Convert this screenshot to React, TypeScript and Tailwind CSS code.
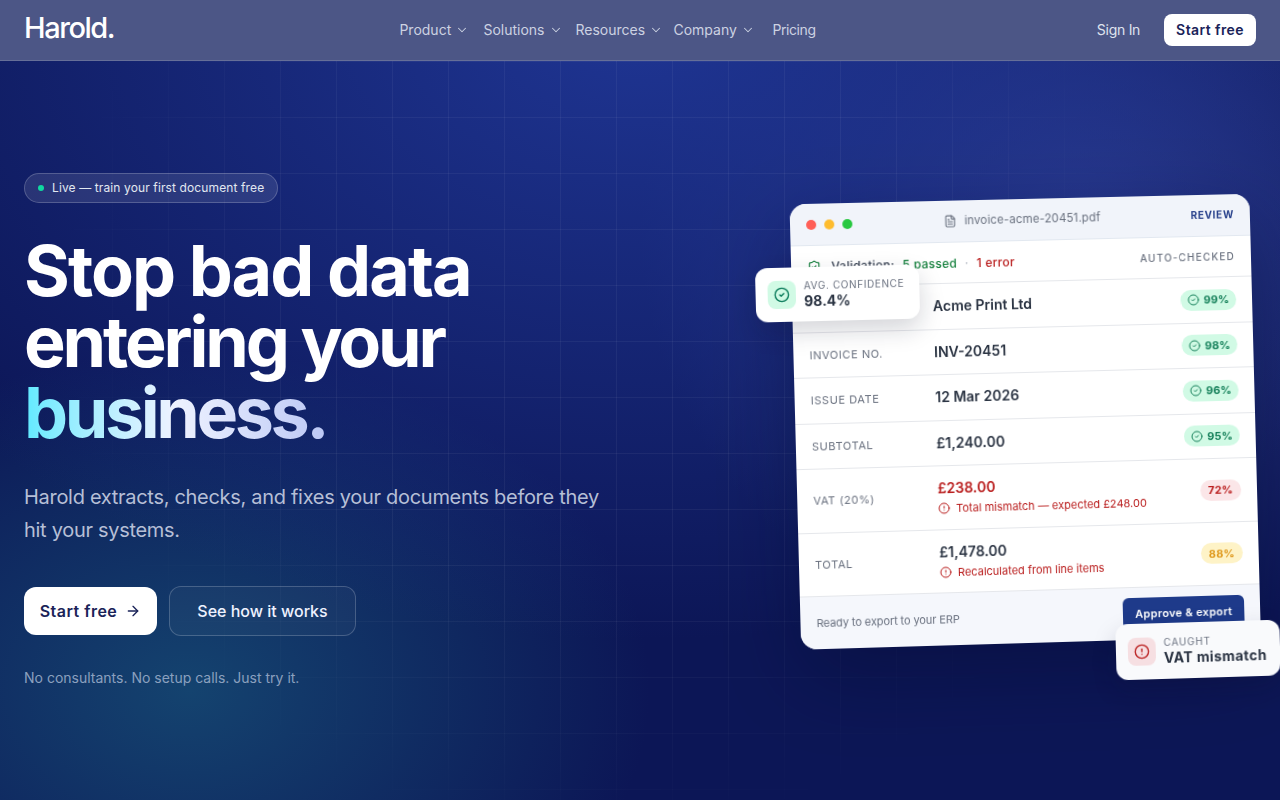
import { ArrowRight, ChevronDown, CircleAlert, CircleCheck, FileText, ShieldCheck } from 'lucide-react';

const navItems = [
  { label: 'Product', width: 'w-[84px]' },
  { label: 'Solutions', width: 'w-[92px]' },
  { label: 'Resources', width: 'w-[98px]' },
  { label: 'Company', width: 'w-[99px]' },
];

interface Field {
  label: string;
  value: string;
  score: string;
  tone: 'good' | 'bad' | 'warn';
  note?: string;
}

const fields: Field[] = [
  { label: 'Supplier', value: 'Acme Print Ltd', score: '99%', tone: 'good' },
  { label: 'Invoice no.', value: 'INV-20451', score: '98%', tone: 'good' },
  { label: 'Issue date', value: '12 Mar 2026', score: '96%', tone: 'good' },
  { label: 'Subtotal', value: '£1,240.00', score: '95%', tone: 'good' },
  { label: 'VAT (20%)', value: '£238.00', score: '72%', tone: 'bad', note: 'Total mismatch — expected £248.00' },
  { label: 'Total', value: '£1,478.00', score: '88%', tone: 'warn', note: 'Recalculated from line items' },
];

function Score({ score, tone }: { score: string; tone: Field['tone'] }) {
  if (tone === 'good') {
    return (
      <span className="flex h-[21px] items-center gap-1 rounded-full bg-[#d1fae5] px-[7px] text-[11px] font-bold tracking-[0.01em] text-[#15805a]">
        <CircleCheck className="h-3 w-3" />
        {score}
      </span>
    );
  }
  return (
    <span
      className={
        tone === 'bad'
          ? 'flex h-[21px] items-center rounded-full bg-[#fbe6e8] px-2 text-[11px] font-bold tracking-[0.02em] text-[#b91c1c]'
          : 'flex h-[21px] items-center rounded-full bg-[#fef3c7] px-2 text-[11px] font-bold tracking-[0.02em] text-[#df9a1f]'
      }
    >
      {score}
    </span>
  );
}

function FieldRow({ field }: { field: Field }) {
  const bad = field.tone === 'bad';
  return (
    <div className={field.note ? 'flex h-[63.5px] items-center border-b border-[#e5e7eb] px-4' : 'flex h-[45.5px] items-center border-b border-[#e5e7eb] px-4'}>
      <div className="w-[124px] text-[11px] uppercase tracking-[0.05em] text-[#6b7280]">{field.label}</div>
      <div className="min-w-0 flex-1">
        <div className={bad ? 'text-sm font-semibold text-[#b91c1c]' : 'text-sm font-semibold text-[#2a3342]'}>{field.value}</div>
        {field.note && (
          <div className="mt-0.5 flex items-center gap-[6px] text-[11px] text-[#b91c1c]">
            <CircleAlert className="h-3 w-3" />
            {field.note}
          </div>
        )}
      </div>
      <Score score={field.score} tone={field.tone} />
    </div>
  );
}

function InvoiceCard() {
  return (
    <div className="relative mb-5 w-[460px] shrink-0 rounded-2xl bg-white shadow-[0_30px_80px_rgba(5,10,50,0.45)] [transform:perspective(1400px)_rotateY(1.2deg)_rotate(-1.5deg)]">
      <div className="flex h-[42px] items-center justify-between rounded-t-2xl border-b border-[#e2e8f0] bg-[#f1f4fa] px-4">
        <div className="flex gap-2">
          <span className="h-2.5 w-2.5 rounded-full bg-[#ff5f57]" />
          <span className="h-2.5 w-2.5 rounded-full bg-[#febc2e]" />
          <span className="h-2.5 w-2.5 rounded-full bg-[#28c840]" />
        </div>
        <div className="flex items-center gap-2 text-[11.5px] tracking-[0.01em] text-[#6b7280]">
          <FileText className="h-[13px] w-[13px]" />
          invoice-acme-20451.pdf
        </div>
        <div className="text-[10px] font-bold tracking-[0.07em] text-[#27408b]">REVIEW</div>
      </div>
      <div className="flex h-[41px] items-center justify-between border-b border-[#e5e7eb] px-4 pt-0.5 text-xs tracking-[0.02em]">
        <div className="flex items-center">
          <ShieldCheck className="mr-[10px] h-[14px] w-[14px] text-[#15803d]" />
          <span className="mr-2 font-medium text-[#374151]">Validation:</span>
          <span className="font-medium text-[#15803d]">5 passed</span>
          <span className="mx-2 text-[#9ca3af]">·</span>
          <span className="font-medium text-[#b91c1c]">1 error</span>
        </div>
        <div className="text-[10px] font-medium uppercase tracking-[0.12em] text-[#6b7280]">Auto-checked</div>
      </div>
      {fields.map((field) => (
        <FieldRow key={field.label} field={field} />
      ))}
      <div className="flex h-[52px] items-center justify-between rounded-b-2xl bg-[#f5f7fc] px-4">
        <span className="text-[11px] tracking-[-0.01em] text-[#6b7280]">Ready to export to your ERP</span>
        <span className="rounded-md bg-[#1e3a8a] px-3 py-2 text-[11px] font-semibold tracking-[0.03em] text-white">Approve &amp; export</span>
      </div>

      <div className="absolute left-[-36px] top-[63px] flex h-[54px] w-[163px] items-center gap-2 rounded-xl bg-white px-3 shadow-[0_10px_25px_rgba(15,23,42,0.18)]">
        <span className="flex h-7 w-7 shrink-0 items-center justify-center rounded-lg bg-[#d1fae5]">
          <CircleCheck className="h-4 w-4 text-[#047857]" />
        </span>
        <div className="whitespace-nowrap">
          <div className="text-[10px] uppercase leading-[14px] tracking-[0.06em] text-[#6b7280]">Avg. confidence</div>
          <div className="text-sm font-bold leading-[18px] text-[#2a3342]">98.4%</div>
        </div>
      </div>

      <div className="absolute right-[-19px] top-[428px] flex h-[56px] w-[165px] items-center gap-2 rounded-xl bg-[#f9fafc] px-3 shadow-[0_10px_25px_rgba(15,23,42,0.18)]">
        <span className="flex h-7 w-7 shrink-0 items-center justify-center rounded-lg bg-[#f6dfe2]">
          <CircleAlert className="h-4 w-4 text-[#b91c1c]" />
        </span>
        <div className="whitespace-nowrap">
          <div className="text-[10px] uppercase leading-[14px] tracking-[0.08em] text-[#6b7280]">Caught</div>
          <div className="text-sm font-bold leading-[18px] tracking-[0.03em] text-[#2a3342]">VAT mismatch</div>
        </div>
      </div>
    </div>
  );
}

export default function App() {
  return (
    <div className="relative h-[800px] w-full overflow-hidden bg-[#0c1656] font-['Inter',sans-serif]">
      {/* Glows and grid sit behind everything */}
      <div className="absolute inset-0 bg-[radial-gradient(ellipse_900px_620px_at_640px_20px,#1f3593_0%,rgba(31,53,147,0.5)_50%,transparent_100%),radial-gradient(ellipse_440px_420px_at_1080px_230px,#2c3a8a_0%,transparent_100%),radial-gradient(ellipse_460px_340px_at_190px_690px,#14436f_0%,transparent_100%)]" />
      <div className="absolute inset-x-0 bottom-0 top-[61px] bg-[linear-gradient(rgba(255,255,255,0.05)_1px,transparent_1px),linear-gradient(90deg,rgba(255,255,255,0.05)_1px,transparent_1px)] bg-[size:56px_56px] [mask-image:radial-gradient(ellipse_560px_560px_at_600px_240px,black_55%,transparent_100%)]" />

      <header className="relative flex h-[61px] items-center justify-between border-b border-white/15 bg-[#4c5686] px-6">
        <div className="pb-1 text-[29px] font-medium tracking-[-0.05em] text-white">Harold.</div>
        <nav className="ml-1 flex items-center text-sm text-[#ccd2e2]">
          {navItems.map((item) => (
            <span key={item.label} className={`${item.width} flex items-center gap-1`}>
              {item.label}
              <ChevronDown className="h-[14px] w-[14px]" strokeWidth={1.75} />
            </span>
          ))}
          <span className="tracking-[-0.03em]">Pricing</span>
        </nav>
        <div className="flex items-center gap-6">
          <span className="text-sm tracking-[-0.02em] text-[#dfe3ee]">Sign In</span>
          <span className="flex h-8 items-center rounded-lg bg-white px-3 text-sm font-semibold tracking-[0.03em] text-[#1a2358]">Start free</span>
        </div>
      </header>

      <main className="relative flex h-[739px] items-center justify-between px-6">
        <div className="w-[620px]">
          <div className="inline-flex h-[30px] items-center gap-2 rounded-full border border-white/20 bg-white/10 px-[13px] text-xs tracking-[0.01em] text-[#e2e8f0]">
            <span className="h-1.5 w-1.5 rounded-full bg-[#10d9a0]" />
            Live — train your first document free
          </div>
          <h1 className="mt-8 text-[70px] font-bold leading-[71px] text-white">
            <span className="block tracking-[-1.94px]">Stop bad data</span>
            <span className="block tracking-[-3.1px]">entering your</span>
            <span className="block w-fit bg-gradient-to-r from-[#5eeaff] via-[#eef2ff] to-[#bcc8f5] bg-clip-text tracking-[-3.4px] text-transparent">business.</span>
          </h1>
          <p className="mt-[33px] w-[590px] text-xl leading-[33px] tracking-[-0.3px] text-[#b6bfd6]">
            Harold extracts, checks, and fixes your documents before they hit your systems.
          </p>
          <div className="mt-[39px] flex items-center gap-3">
            <span className="flex h-12 w-[133px] items-center justify-center gap-2 rounded-xl bg-white text-base font-semibold tracking-[0.03em] text-[#1a2358]">
              Start free
              <ArrowRight className="h-4 w-4" />
            </span>
            <span className="flex h-[50px] w-[187px] items-center justify-center rounded-xl border border-white/20 bg-white/[0.03] text-base font-medium text-[#eef2ff]">See how it works</span>
          </div>
          <p className="mt-[32px] text-sm text-[#8ba0bf]">No consultants. No setup calls. Just try it.</p>
        </div>
        <InvoiceCard />
      </main>
    </div>
  );
}
